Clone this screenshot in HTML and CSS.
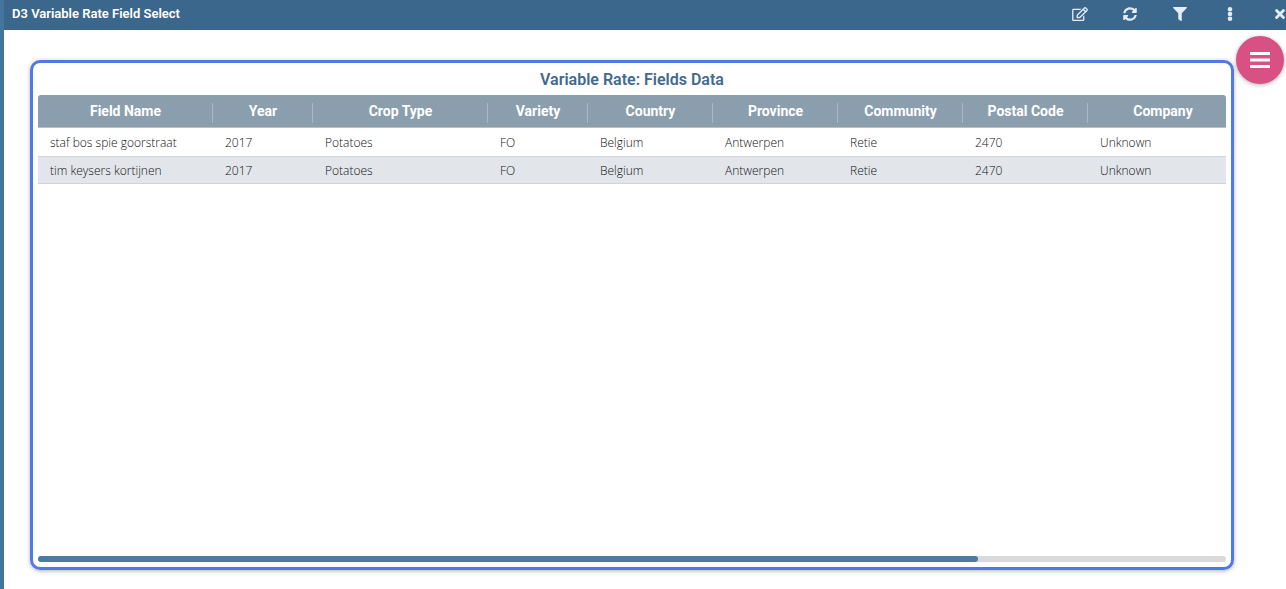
FILE: index.html
```html
<!DOCTYPE html>
<html lang="en">
<head>
<meta charset="utf-8">
<meta name="viewport" content="width=device-width, initial-scale=1">
<title>D3 Variable Rate Field Select</title>
<link rel="stylesheet" href="styles.css">
</head>
<body>
<div class="window">
  <header class="titlebar">
    <h1 class="titlebar-title">D3 Variable Rate Field Select</h1>
    <div class="toolbar">
      <button class="tool" type="button" aria-label="Edit"><svg class="icon icon-wide" viewBox="0 0 576 512"><path d="M402.3 344.9l32-32c5-5 13.7-1.5 13.7 5.7V464c0 26.500-21.500 48-48 48H48c-26.500 0-48-21.500-48-48V112c0-26.500 21.500-48 48-48h273.500c7.100 0 10.700 8.600 5.700 13.700l-32 32c-1.500 1.500-3.500 2.300-5.700 2.300H48v352h352V350.500c0-2.100.8-4.100 2.300-5.600zm156.600-201.800L296.300 405.700l-90.400 10c-26.200 2.900-48.500-19.200-45.600-45.600l10-90.400L432.900 17.100c22.900-22.900 59.900-22.900 82.700 0l43.200 43.200c22.900 22.900 22.900 60 .1 82.800zM460.100 174L402 115.900 216.200 301.800l-7.300 65.300 65.300-7.300L460.100 174zm64.800-79.700l-43.200-43.200c-4.100-4.100-10.800-4.100-14.800 0L436 82l58.100 58.100 30.900-30.900c4-4.200 4-10.800-.1-14.900z"/></svg></button>
      <button class="tool" type="button" aria-label="Refresh"><svg class="icon" viewBox="0 0 512 512"><path d="M370.720 133.280C339.458 104.008 298.888 87.962 255.848 88c-77.458.068-144.328 53.178-162.791 126.850-1.344 5.363-6.122 9.150-11.651 9.150H24.103c-7.498 0-13.194-6.807-11.807-14.176C33.933 94.924 134.813 8 256 8c66.448 0 126.791 26.136 171.315 68.685L463.030 40.970C478.149 25.851 504 36.559 504 57.941V192c0 13.255-10.745 24-24 24H345.941c-21.382 0-32.090-25.851-16.971-40.971l41.750-41.749zM32 296h134.059c21.382 0 32.090 25.851 16.971 40.971l-41.750 41.750c31.262 29.273 71.835 45.319 114.876 45.280 77.418-.07 144.315-53.144 162.787-126.849 1.344-5.363 6.122-9.150 11.651-9.150h57.304c7.498 0 13.194 6.807 11.807 14.176C478.067 417.076 377.187 504 256 504c-66.448 0-126.791-26.136-171.315-68.685L48.970 471.030C33.851 486.149 8 475.441 8 454.059V320c0-13.255 10.745-24 24-24z"/></svg></button>
      <button class="tool" type="button" aria-label="Filter"><svg class="icon" viewBox="0 0 512 512"><path d="M487.976 0H24.028C2.710 0-8.047 25.866 7.058 40.971L192 225.941V432c0 7.831 3.821 15.170 10.237 19.662l80 55.980C298.020 518.690 320 507.493 320 487.980V225.941l184.947-184.970C520.021 25.896 509.338 0 487.976 0z"/></svg></button>
      <button class="tool" type="button" aria-label="More"><svg class="icon" viewBox="0 0 512 512"><circle cx="256" cy="84" r="84"/><circle cx="256" cy="256" r="84"/><circle cx="256" cy="428" r="84"/></svg></button>
      <button class="tool" type="button" aria-label="Close"><svg class="icon" viewBox="0 0 512 512"><path class="cross" d="M130 130L382 382M382 130L130 382"/></svg></button>
    </div>
  </header>
  <main class="content">
    <section class="card">
      <h2 class="card-title">Variable Rate: Fields Data</h2>
      <div class="grid">
        <table class="fields">
          <colgroup>
            <col class="col-lg"><col class="col-sm"><col class="col-lg"><col class="col-sm"><col class="col-md"><col class="col-md"><col class="col-md"><col class="col-md"><col class="col-xl">
          </colgroup>
          <thead>
            <tr><th>Field Name</th><th>Year</th><th>Crop Type</th><th>Variety</th><th>Country</th><th>Province</th><th>Community</th><th>Postal Code</th><th>Company</th></tr>
          </thead>
          <tbody>
            <tr><td>staf bos spie goorstraat</td><td>2017</td><td>Potatoes</td><td>FO</td><td>Belgium</td><td>Antwerpen</td><td>Retie</td><td>2470</td><td>Unknown</td></tr>
            <tr><td>tim keysers kortijnen</td><td>2017</td><td>Potatoes</td><td>FO</td><td>Belgium</td><td>Antwerpen</td><td>Retie</td><td>2470</td><td>Unknown</td></tr>
          </tbody>
        </table>
      </div>
      <div class="scroll-track"><div class="scroll-thumb"></div></div>
    </section>
    <button class="menu-button" type="button" aria-label="Menu"><svg class="menu-icon" viewBox="0 0 20 18"><path d="M0 2.500H20M0 9H20M0 15.500H20"/></svg></button>
  </main>
</div>
</body>
</html>
```
FILE: styles.css
```css
* {
  box-sizing: border-box;
}

body {
  margin: 0;
  background: #fff;
  font-family: Roboto, "Liberation Sans", sans-serif;
}

button {
  padding: 0;
  border: 0;
  background: none;
  cursor: pointer;
}

.window {
  display: flex;
  flex-direction: column;
  min-height: 100vh;
  border-left: 4px solid #43759c;
  overflow: hidden;
}

.titlebar {
  display: flex;
  align-items: center;
  justify-content: space-between;
  height: 30px;
  padding: 0 0 3px 8px;
  background: #3c678c;
}

.titlebar-title {
  margin: 0;
  color: #fff;
  font-size: 13px;
  font-weight: 600;
  line-height: 16px;
}

.toolbar {
  display: flex;
  gap: 34px;
  margin-right: -2px;
}

.tool {
  display: flex;
  align-items: center;
  justify-content: center;
  width: 16px;
  height: 24px;
}

.icon {
  flex: none;
  width: 16px;
  height: 14px;
  fill: #e4edf7;
}

.cross {
  fill: none;
  stroke: #e4edf7;
  stroke-width: 104;
  stroke-linecap: round;
}

.content {
  position: relative;
  display: flex;
  flex: 1;
  padding: 30px 52px 19px 26px;
}

.card {
  display: flex;
  flex: 1;
  flex-direction: column;
  min-width: 0;
  padding: 5px;
  border: 3px solid #4f78e8;
  border-radius: 10px;
  box-shadow: 0 1px 4px rgba(0, 0, 0, 0.3);
}

.card-title {
  margin: 0;
  padding: 1px 0 4px;
  color: #426a8e;
  font-size: 16px;
  font-weight: 600;
  line-height: 22px;
  text-align: center;
}

.grid {
  flex: 1;
  overflow: hidden;
  border-radius: 3px 3px 0 0;
}

.fields {
  width: 1200px;
  border-collapse: separate;
  border-spacing: 0;
  table-layout: fixed;
}

.col-sm { width: 100px; }
.col-md { width: 125px; }
.col-xl { width: 150px; }
.col-lg { width: 175px; }

.fields th {
  height: 33px;
  padding: 0;
  border-bottom: 1px solid #b4c0ca;
  background: linear-gradient(#a9b8c5, #a9b8c5) right 8px / 1px 20px no-repeat #8a9eae;
  color: #fff;
  font-size: 14px;
  font-weight: 700;
  line-height: 20px;
  text-align: center;
}

.fields td {
  height: 28px;
  padding: 1px 12px 0;
  color: #111;
  font-family: "Open Sans", "Noto Sans", sans-serif;
  font-size: 12px;
  font-weight: 300;
  line-height: 18px;
}

.fields tbody tr:nth-child(even) td {
  border-top: 1px solid #ced3d9;
  border-bottom: 1px solid #ced3d9;
  background: #e2e6eb;
}

.scroll-track {
  height: 6px;
  border-radius: 3px;
  background: #dadada;
}

.scroll-thumb {
  width: 79.1%;
  height: 6px;
  border-radius: 3px;
  background: #4a7ba3;
}

.menu-button {
  position: absolute;
  top: 6px;
  right: 2px;
  display: flex;
  align-items: center;
  justify-content: center;
  width: 48px;
  height: 48px;
  border-radius: 50%;
  background: #d85084;
  box-shadow: 0 1px 4px rgba(0, 0, 0, 0.3);
}

.menu-icon {
  width: 20px;
  height: 18px;
  fill: none;
  stroke: #fff;
  stroke-width: 3;
}
```
